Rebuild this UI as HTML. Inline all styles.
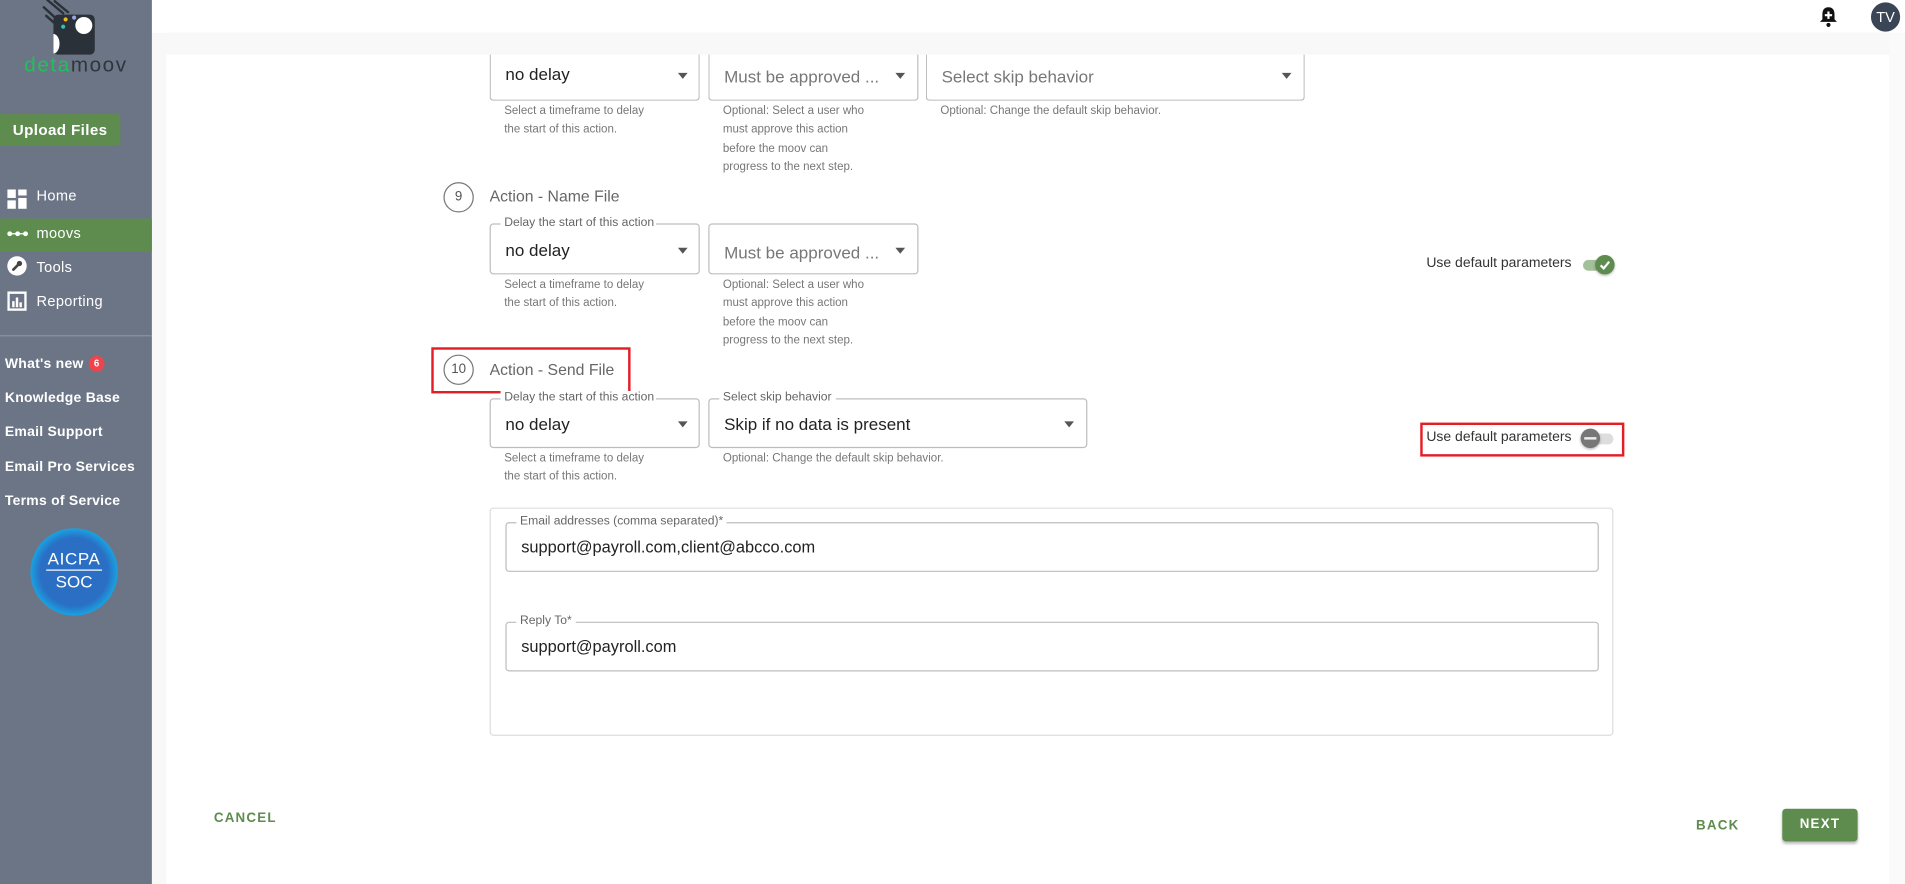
<!DOCTYPE html>
<html><head><meta charset="utf-8"><style>
*{box-sizing:border-box;margin:0;padding:0}
html,body{width:1905px;height:884px;overflow:hidden;background:#fff;font-family:"Liberation Sans",sans-serif}
#w{position:absolute;left:0;top:0;width:1568px;height:728px;transform:scale(1.21492,1.21429);transform-origin:0 0;background:#f8f8f8}
.a{position:absolute}
#side{left:0;top:0;width:125px;height:728px;background:#6c7586}
.nav{position:absolute;left:30px;color:#fff;font-size:12px;letter-spacing:.3px}
.lnk{position:absolute;left:4px;color:#fff;font-size:11.5px;font-weight:bold;letter-spacing:.2px}
.fld{position:absolute;border:1px solid #bdbdbd;border-radius:3px;background:#fff}
.val{position:absolute;left:12px;font-size:14px;color:#222}
.ph{position:absolute;left:12px;font-size:14px;color:#777}
.arr{position:absolute;width:0;height:0;border-left:4px solid transparent;border-right:4px solid transparent;border-top:5px solid #555}
.lbl{position:absolute;top:-7px;left:8px;background:#fff;padding:0 3px;font-size:10px;color:#666;white-space:nowrap;overflow:hidden;line-height:12px}
.help{position:absolute;font-size:9.5px;color:#777;line-height:15.3px}
.num{position:absolute;width:25px;height:25px;border:1px solid #777;border-radius:50%;font-size:11px;color:#555;text-align:center;line-height:23px}
.ttl{position:absolute;font-size:13px;color:#666}
.udp{position:absolute;font-size:11.5px;color:#333}
svg{display:block}
</style></head><body><div id="w">
<div class="a" style="left:125px;top:0;width:1443px;height:27px;background:#fff"></div>
<div class="a" style="left:137px;top:45px;width:1418px;height:683px;background:#fff"></div>
<div class="a" style="left:1555px;top:27px;width:13px;height:701px;background:#fafafa"></div>

<div id="side" class="a">
 <svg class="a" style="left:34px;top:0" width="46" height="46" viewBox="0 0 46 46">
  <g stroke="#2b3138" stroke-width="2" stroke-linecap="round"><line x1="5" y1="0" x2="18" y2="11"/><line x1="11" y1="1" x2="22" y2="10"/><line x1="2" y1="6" x2="13" y2="16"/><line x1="4" y1="13" x2="12" y2="20"/></g>
  <rect x="10" y="12" width="34" height="33" rx="4" fill="#2b3138"/>
  <circle cx="35" cy="21" r="7" fill="#fff"/><path d="M10 28 a5 8 0 0 1 0 16z" fill="#fff"/>
  <circle cx="20" cy="16" r="1.7" fill="#e8b92b"/><circle cx="27" cy="14.5" r="1.7" fill="#9aa4e8"/><circle cx="18" cy="22" r="1.7" fill="#2cc6b4"/>
 </svg>
 <div class="a" style="left:20px;top:44px;font-size:17px;letter-spacing:1.3px;color:#2f353c"><span style="color:#1fc15b">deta</span>moov</div>
 <div class="a" style="left:0;top:94px;width:99px;height:26px;background:#5e8c4e;border-radius:0 3px 3px 0;color:#fff;font-weight:bold;font-size:12.5px;line-height:26px;text-align:center;letter-spacing:.3px">Upload Files</div>
 <svg class="a" style="left:6px;top:156px" width="16" height="16"><rect x="0" y="0" width="7" height="7" fill="#fff"/><rect x="9" y="0" width="7" height="5" fill="#fff"/><rect x="0" y="9" width="7" height="7" fill="#fff"/><rect x="9" y="7" width="7" height="9" fill="#fff"/></svg>
 <div class="nav" style="top:154px">Home</div>
 <div class="a" style="left:0;top:180px;width:125px;height:27px;background:#5e8c4e"></div>
 <svg class="a" style="left:6px;top:190px" width="17" height="5"><line x1="0" y1="2.5" x2="17" y2="2.5" stroke="#fff"/><circle cx="2" cy="2.5" r="2" fill="#fff"/><circle cx="8.5" cy="2.5" r="2" fill="#fff"/><circle cx="15" cy="2.5" r="2" fill="#fff"/></svg>
 <div class="nav" style="top:185px">moovs</div>
 <div class="a" style="left:6px;top:211px;width:16px;height:16px;border-radius:50%;background:#fff"></div>
 <svg class="a" style="left:6px;top:211px" width="16" height="16"><path d="M5 11 L9 7" stroke="#444" stroke-width="2.2" stroke-linecap="round"/><circle cx="10" cy="6" r="2.2" fill="#444"/></svg>
 <div class="nav" style="top:213px">Tools</div>
 <svg class="a" style="left:6px;top:240px" width="16" height="16"><rect x="1" y="1" width="14" height="14" fill="none" stroke="#fff" stroke-width="2"/><rect x="4" y="8" width="2" height="5" fill="#fff"/><rect x="7" y="5" width="2" height="8" fill="#fff"/><rect x="10" y="9" width="2" height="4" fill="#fff"/></svg>
 <div class="nav" style="top:241px">Reporting</div>
 <div class="a" style="left:0;top:276px;width:125px;height:1px;background:#8a93a1"></div>
 <div class="lnk" style="top:294px">What's new</div>
 <div class="a" style="left:73px;top:293px;width:13px;height:13px;border-radius:50%;background:#f0444c;color:#fff;font-size:8px;font-weight:bold;text-align:center;line-height:13px">6</div>
 <div class="lnk" style="top:322px">Knowledge Base</div>
 <div class="lnk" style="top:350px">Email Support</div>
 <div class="lnk" style="top:379px">Email Pro Services</div>
 <div class="lnk" style="top:407px">Terms of Service</div>
 <div class="a" style="left:25px;top:435px;width:72px;height:72px;border-radius:50%;background:radial-gradient(circle,#2a6fc4 55%,#1aa0e0 70%,#1d7bcf 100%);color:#fff;text-align:center">
  <div style="font-size:14px;margin-top:17px;letter-spacing:.5px">AICPA</div>
  <div style="width:46px;height:1px;background:#fff;margin:1px auto"></div>
  <div style="font-size:14px">SOC</div>
 </div>
</div>

<svg class="a" style="left:1497px;top:5px" width="16" height="18" viewBox="0 0 16 18"><path d="M8 1 C4 1 3 4 3 7 L3 11 L1 13 L15 13 L13 11 L13 7 C13 4 12 1 8 1Z" fill="#111"/><circle cx="8" cy="15.5" r="1.7" fill="#111"/><path d="M8 4.5v6M5 7.5h6" stroke="#fff" stroke-width="1.8"/></svg>
<div class="a" style="left:1540px;top:2px;width:24px;height:24px;border-radius:50%;background:#3a4556;color:#fff;font-size:12px;text-align:center;line-height:24px">TV</div>

<div class="fld" style="left:403px;top:36px;width:173px;height:47px;border-top:none;border-radius:0 0 3px 3px"><div class="val" style="top:17px">no delay</div><div class="arr" style="left:154px;top:24px"></div></div>
<div class="fld" style="left:583px;top:36px;width:173px;height:47px;border-top:none;border-radius:0 0 3px 3px"><div class="ph" style="top:19px">Must be approved ...</div><div class="arr" style="left:153px;top:24px"></div></div>
<div class="fld" style="left:762px;top:36px;width:312px;height:47px;border-top:none;border-radius:0 0 3px 3px"><div class="ph" style="top:19px">Select skip behavior</div><div class="arr" style="left:292px;top:24px"></div></div>
<div class="a" style="left:137px;top:27px;width:1418px;height:18px;background:#f8f8f8"></div>
<div class="help" style="left:415px;top:84px">Select a timeframe to delay<br>the start of this action.</div>
<div class="help" style="left:595px;top:84px">Optional: Select a user who<br>must approve this action<br>before the moov can<br>progress to the next step.</div>
<div class="help" style="left:774px;top:84px">Optional: Change the default skip behavior.</div>

<div class="num" style="left:365px;top:150px">9</div>
<div class="ttl" style="left:403px;top:154px">Action - Name File</div>
<div class="fld" style="left:403px;top:184px;width:173px;height:42px"><div class="lbl" style="width:128px">Delay the start of this action</div><div class="val" style="top:13px">no delay</div><div class="arr" style="left:154px;top:19px"></div></div>
<div class="fld" style="left:583px;top:184px;width:173px;height:42px"><div class="ph" style="top:15px">Must be approved ...</div><div class="arr" style="left:153px;top:19px"></div></div>
<div class="help" style="left:415px;top:227px">Select a timeframe to delay<br>the start of this action.</div>
<div class="help" style="left:595px;top:227px">Optional: Select a user who<br>must approve this action<br>before the moov can<br>progress to the next step.</div>
<div class="udp" style="left:1174px;top:211px">Use default parameters</div>
<div class="a" style="left:1303px;top:214px;width:22px;height:9px;border-radius:5px;background:#a3c09a"></div>
<div class="a" style="left:1313px;top:210px;width:16px;height:16px;border-radius:50%;background:#5e8c4e;box-shadow:0 1px 2px rgba(0,0,0,.3)"></div>
<svg class="a" style="left:1313px;top:210px" width="16" height="16"><path d="M4.5 8.5 L7 11 L11.5 5.5" stroke="#fff" stroke-width="1.8" fill="none"/></svg>

<div class="a" style="left:355px;top:286px;width:164px;height:38px;border:2px solid #e51d25"></div>
<div class="num" style="left:365px;top:292px">10</div>
<div class="ttl" style="left:403px;top:297px">Action - Send File</div>
<div class="fld" style="left:403px;top:328px;width:173px;height:41px"><div class="lbl" style="width:128px">Delay the start of this action</div><div class="val" style="top:12px">no delay</div><div class="arr" style="left:154px;top:18px"></div></div>
<div class="fld" style="left:583px;top:328px;width:312px;height:41px"><div class="lbl">Select skip behavior</div><div class="val" style="top:12px">Skip if no data is present</div><div class="arr" style="left:292px;top:18px"></div></div>
<div class="help" style="left:415px;top:370px">Select a timeframe to delay<br>the start of this action.</div>
<div class="help" style="left:595px;top:370px">Optional: Change the default skip behavior.</div>
<div class="a" style="left:1169px;top:348px;width:168px;height:28px;border:2px solid #e51d25"></div>
<div class="udp" style="left:1174px;top:354px">Use default parameters</div>
<div class="a" style="left:1303px;top:357px;width:25px;height:9px;border-radius:5px;background:#ddd"></div>
<div class="a" style="left:1301px;top:353px;width:16px;height:16px;border-radius:50%;background:#777;box-shadow:0 1px 2px rgba(0,0,0,.3)"></div>
<div class="a" style="left:1304px;top:360px;width:10px;height:2px;background:#eee"></div>

<div class="a" style="left:403px;top:418px;width:925px;height:188px;border:1px solid #ddd;border-radius:3px;background:#fff"></div>
<div class="fld" style="left:416px;top:430px;width:900px;height:41px"><div class="lbl">Email addresses (comma separated)*</div><div class="val" style="top:12px;font-size:13.5px">support@payroll.com,client@abcco.com</div></div>
<div class="fld" style="left:416px;top:512px;width:900px;height:41px"><div class="lbl">Reply To*</div><div class="val" style="top:12px;font-size:13.5px">support@payroll.com</div></div>

<div class="a" style="left:176px;top:668px;font-size:11px;font-weight:bold;color:#5e8c4e;letter-spacing:1px">CANCEL</div>
<div class="a" style="left:1396px;top:674px;font-size:11px;font-weight:bold;color:#5e8c4e;letter-spacing:1px">BACK</div>
<div class="a" style="left:1467px;top:666px;width:62px;height:27px;background:#5e8c4e;border-radius:3px;box-shadow:0 2px 2px rgba(0,0,0,.25);color:#fff;font-size:11px;font-weight:bold;text-align:center;line-height:27px;letter-spacing:1px">NEXT</div>
</div></body></html>
